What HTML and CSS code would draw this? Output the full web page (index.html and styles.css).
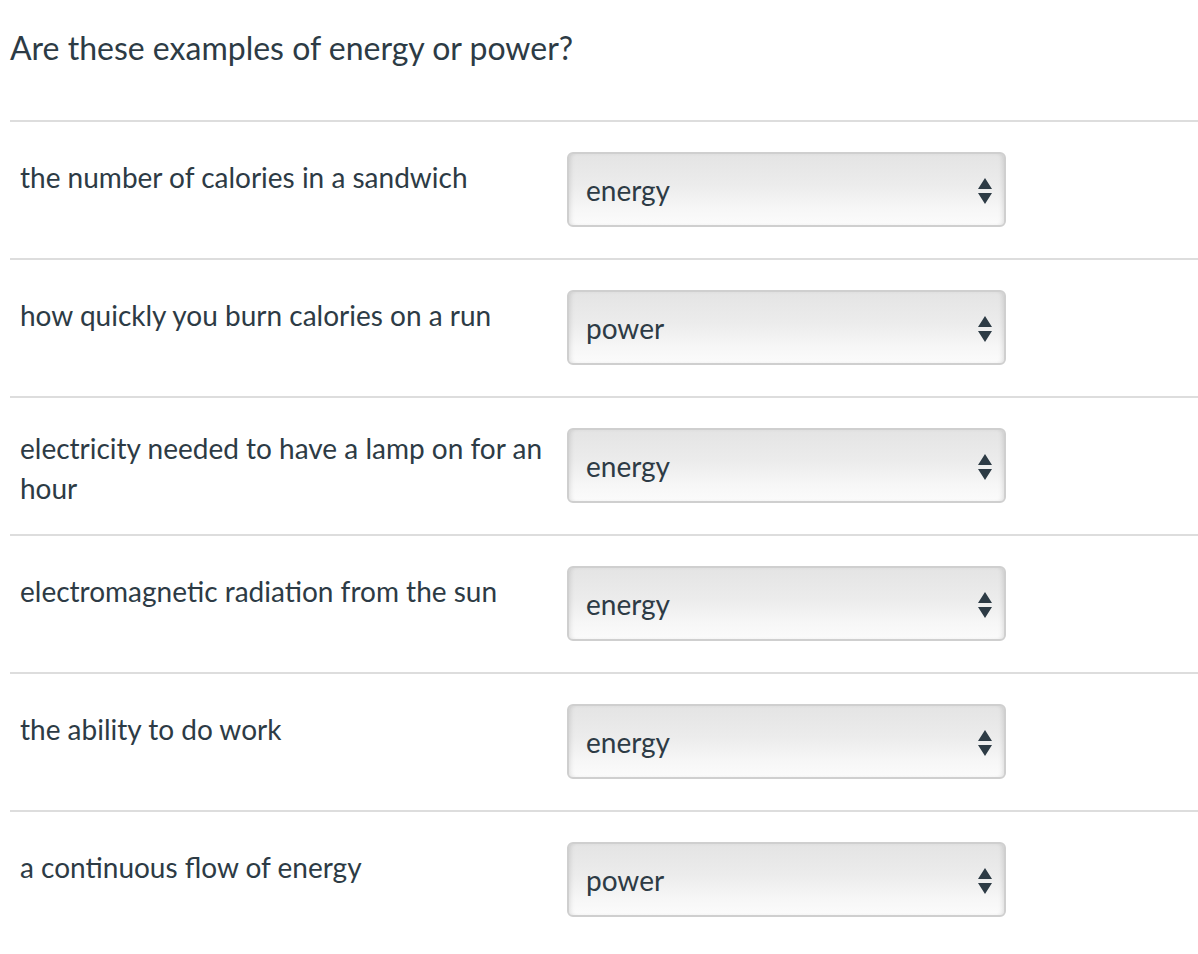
FILE: index.html
```html
<!DOCTYPE html>
<html lang="en">
<head>
<meta charset="utf-8">
<title>Energy or power</title>
<link rel="stylesheet" href="styles.css">
</head>
<body>
<div class="page">
  <h1 class="question">Are these examples of energy or power?</h1>
  <div class="rows">
    <div class="row">
      <div class="label">the number of calories in a sandwich</div>
      <div class="select"><span>energy</span><svg class="arrows" width="14" height="26" viewBox="0 0 14 26"><path d="M7 0 L14 11 L0 11 Z M0 15 L14 15 L7 26 Z" fill="#2d3b45"/></svg></div>
    </div>
    <div class="row">
      <div class="label">how quickly you burn calories on a run</div>
      <div class="select"><span>power</span><svg class="arrows" width="14" height="26" viewBox="0 0 14 26"><path d="M7 0 L14 11 L0 11 Z M0 15 L14 15 L7 26 Z" fill="#2d3b45"/></svg></div>
    </div>
    <div class="row row--wrap">
      <div class="label">electricity needed to have a lamp on for an hour</div>
      <div class="select"><span>energy</span><svg class="arrows" width="14" height="26" viewBox="0 0 14 26"><path d="M7 0 L14 11 L0 11 Z M0 15 L14 15 L7 26 Z" fill="#2d3b45"/></svg></div>
    </div>
    <div class="row">
      <div class="label">electromagnetic radiation from the sun</div>
      <div class="select"><span>energy</span><svg class="arrows" width="14" height="26" viewBox="0 0 14 26"><path d="M7 0 L14 11 L0 11 Z M0 15 L14 15 L7 26 Z" fill="#2d3b45"/></svg></div>
    </div>
    <div class="row">
      <div class="label">the ability to do work</div>
      <div class="select"><span>energy</span><svg class="arrows" width="14" height="26" viewBox="0 0 14 26"><path d="M7 0 L14 11 L0 11 Z M0 15 L14 15 L7 26 Z" fill="#2d3b45"/></svg></div>
    </div>
    <div class="row">
      <div class="label">a continuous flow of energy</div>
      <div class="select"><span>power</span><svg class="arrows" width="14" height="26" viewBox="0 0 14 26"><path d="M7 0 L14 11 L0 11 Z M0 15 L14 15 L7 26 Z" fill="#2d3b45"/></svg></div>
    </div>
  </div>
</div>
</body>
</html>
```

FILE: styles.css
```css
html, body {
  margin: 0;
  padding: 0;
  background: #ffffff;
}

body {
  font-family: Lato, "Open Sans", "Liberation Sans", sans-serif;
  color: #2d3b45;
}

.page {
  padding-left: 10px;
}

.question {
  margin: 0;
  padding-top: 30px;
  height: 120px;
  box-sizing: border-box;
  font-size: 32px;
  line-height: 36px;
  font-weight: 400;
}

.row {
  display: flex;
  align-items: flex-start;
  gap: 10px;
  height: 138px;
  box-sizing: border-box;
  border-top: 2px solid #dddddd;
  padding: 30px 0 31px 10px;
}

.label {
  flex: 0 0 537px;
  margin-top: 5px;
  font-size: 28px;
  line-height: 40px;
}

.row--wrap .label {
  margin-top: 0;
}

.select {
  flex: 0 0 439px;
  height: 75px;
  box-sizing: border-box;
  display: flex;
  align-items: center;
  justify-content: space-between;
  padding: 0 12px 0 17px;
  border: 2px solid #cfcfcf;
  border-radius: 6px;
  background: linear-gradient(to bottom, #e4e4e4 0%, #ececec 45%, #f6f6f6 75%, #fbfbfb 100%);
  box-shadow: inset 4px 0 5px -3px rgba(0, 0, 0, 0.12), inset -4px 0 5px -3px rgba(0, 0, 0, 0.12);
  font-size: 28px;
}

.select span {
  margin-top: 0;
}

.arrows {
  display: block;
  margin-top: 2px;
}
```
